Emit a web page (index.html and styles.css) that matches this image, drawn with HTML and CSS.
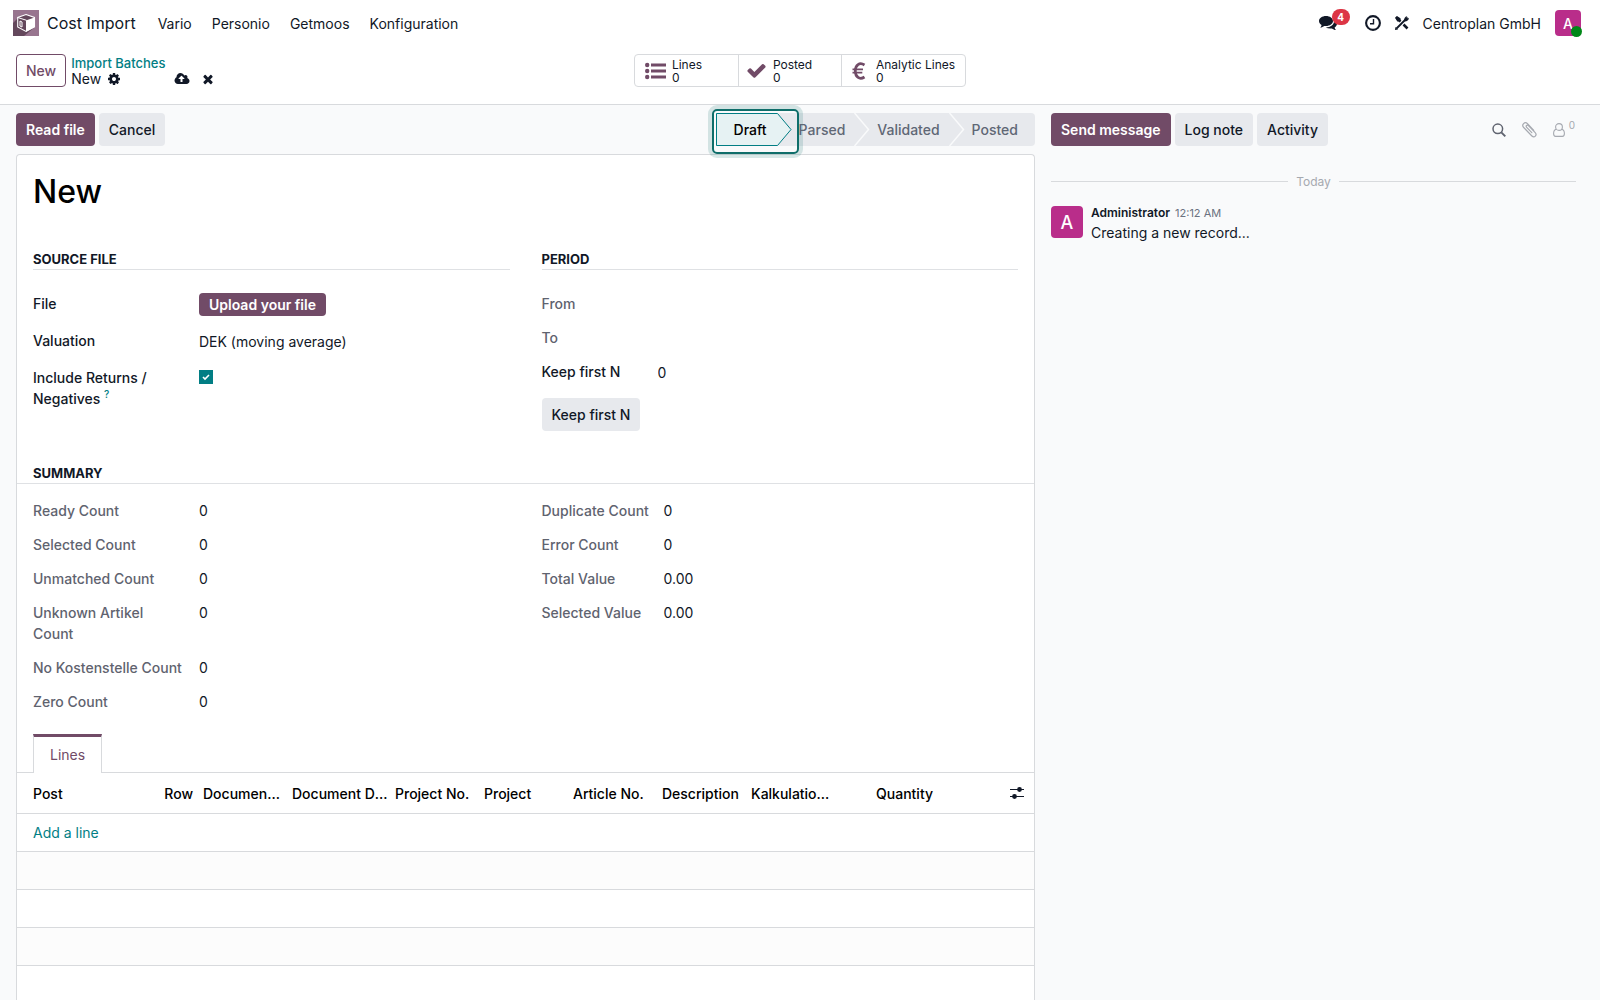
FILE: index.html
```html
<!DOCTYPE html>
<html lang="en">
<head>
    <meta charset="UTF-8">
    <title>Cost Import - New</title>
    <link rel="stylesheet" href="styles.css">
</head>
<body>
    <header class="navbar">
        <a class="brand" href="#">
            <svg class="brand-icon" viewBox="0 0 26 26" aria-hidden="true">
                <rect width="26" height="26" fill="#98758f"/>
                <path d="M5 8 0 13v13h11L22 17V8z" fill="#64485c"/>
                <path d="M13 4.500 21.500 7.500v9.500L13 21.500 4.700 17V7.500z" fill="#64485c" stroke="#fff" stroke-width="1.100"/>
                <path d="M13.500 10.300 21.500 7.500v9.500l-8 4.500z" fill="#fff"/>
                <path d="M4.700 7.500l8.800 2.800V21.500M7 11v5l2 1v-5z" fill="none" stroke="#fff" stroke-width="1"/>
            </svg>
            Cost Import
        </a>
        <nav class="menu">
            <a href="#">Vario</a>
            <a href="#">Personio</a>
            <a href="#">Getmoos</a>
            <a href="#">Konfiguration</a>
        </nav>
        <div class="systray">
            <button class="icon-btn messages" aria-label="Messages">
                <svg width="18" height="16" viewBox="0 0 18 16" fill="currentColor">
                    <path d="M7 1c3.900 0 7 2.200 7 5s-3.100 5-7 5c-.6 0-1.200 0-1.700-.1C4.200 11.800 2.800 12.400 1.200 12.500c.7-.7 1.200-1.500 1.400-2.600C1 9 0 7.600 0 6c0-2.800 3.100-5 7-5z"/>
                    <path d="M15.200 5c1.700.8 2.800 2.100 2.800 3.700 0 1.500-.9 2.800-2.400 3.700.2 1 .7 1.800 1.400 2.600-1.600-.1-3-.7-4.100-1.600-.5.1-1.100.1-1.700.1-1.700 0-3.200-.4-4.400-1.100C11.500 12.400 15.400 9.900 15.200 5z"/>
                </svg>
                <span class="badge">4</span>
            </button>
            <button class="icon-btn" aria-label="Activities">
                <svg width="16" height="16" viewBox="0 0 16 16" fill="none" stroke="currentColor">
                    <circle cx="8" cy="8" r="6.900" stroke-width="2.100"/>
                    <path d="M8.500 4v4.800H5" stroke-width="1.400"/>
                </svg>
            </button>
            <button class="icon-btn" aria-label="Tools">
                <svg width="14" height="14" viewBox="0 0 14 14">
                    <path d="M1.500 1.500 5.500 5.500M8.500 8.500l4 4" stroke="currentColor" stroke-width="2.600"/>
                    <path d="M12.500 1.500 1.500 12.500" stroke="currentColor" stroke-width="1.800"/>
                    <path d="M0 1.800 1.800 0l3.700 2.300v3.200H2.300zM9.400 5.600C8.600 3 9.800.6 12.300 0L10.800 2.100l1 1.200L14 1.800c-.3 2.600-2.200 4-4.600 3.800zM0 14l.4-3 2.600 2.600z" fill="currentColor"/>
                </svg>
            </button>
            <span class="company">Centroplan GmbH</span>
            <button class="avatar avatar-user" aria-label="Account">A<span class="online"></span></button>
        </div>
    </header>

    <div class="control-panel">
        <div class="cp-left">
            <button class="btn btn-outline">New</button>
            <div class="breadcrumb">
                <a href="#">Import Batches</a>
                <div class="crumb-current">
                    <span>New</span>
                    <button class="icon-btn cog" aria-label="Actions">
                        <svg width="14" height="14" viewBox="0 0 1792 1792" fill="currentColor"><path d="M1152 896q0-106-75-181t-181-75-181 75-75 181 75 181 181 75 181-75 75-181zm512-109v222q0 12-8 23t-20 13l-185 28q-19 54-39 91 35 50 107 138 10 12 10 25t-9 23q-27 37-99 108t-94 71q-12 0-26-9l-138-108q-44 23-91 38-16 136-29 186-7 28-36 28h-222q-14 0-24.500-8.500t-11.500-21.500l-28-184q-49-16-90-37l-141 107q-10 9-25 9-14 0-25-11-126-114-165-168-7-10-7-23 0-12 8-23 15-21 51-66.500t54-70.500q-27-50-41-99l-183-27q-13-2-21-12.500t-8-23.500v-222q0-12 8-23t19-13l186-28q14-46 39-92-40-57-107-138-10-12-10-24 0-10 9-23 26-36 98.500-107.500t94.500-71.500q13 0 26 10l138 107q44-23 91-38 16-136 29-186 7-28 36-28h222q14 0 24.500 8.500t11.500 21.500l28 184q49 16 90 37l142-107q9-9 24-9 13 0 25 10 129 119 165 170 7 8 7 22 0 12-8 23-15 21-51 66.500t-54 70.500q26 50 41 98l183 28q13 2 21 12.500t8 23.500z"/></svg>
                    </button>
                </div>
            </div>
            <div class="save-actions">
                <button class="icon-btn" aria-label="Save">
                    <svg width="16" height="14" viewBox="0 0 2048 1792" fill="currentColor"><path d="M1344 864q0-14-9-23l-352-352q-9-9-23-9t-23 9l-351 351q-10 12-10 24 0 14 9 23t23 9h224v352q0 13 9.500 22.500t22.500 9.500h192q13 0 22.500-9.500t9.500-22.500v-352h224q13 0 22.500-9.500t9.500-22.500zm640 288q0 159-112.500 271.500t-271.500 112.500h-1088q-185 0-316.500-131.500t-131.500-316.500q0-130 70-240t188-165q-2-30-2-43 0-212 150-362t362-150q156 0 285.500 87t188.500 231q71-62 166-62 106 0 181 75t75 181q0 76-41 138 130 31 213.500 135.500t83.500 238.500z"/></svg>
                </button>
                <button class="icon-btn" aria-label="Discard">
                    <svg width="14" height="14" viewBox="0 0 1792 1792" fill="currentColor"><path d="M1490 1322q0 40-28 68l-136 136q-28 28-68 28t-68-28l-294-294-294 294q-28 28-68 28t-68-28l-136-136q-28-28-28-68t28-68l294-294-294-294q-28-28-28-68t28-68l136-136q28-28 68-28t68 28l294 294 294-294q28-28 68-28t68 28l136 136q28 28 28 68t-28 68l-294 294 294 294q28 28 28 68z"/></svg>
                </button>
            </div>
        </div>
        <div class="stat-buttons">
            <button class="stat">
                <svg width="21" height="18" viewBox="0 0 21 18" fill="currentColor"><circle cx="2.200" cy="3" r="2.200"/><circle cx="2.200" cy="9" r="2.200"/><circle cx="2.200" cy="15" r="2.200"/><path d="M6 1.500h15v3H6zM6 7.500h15v3H6zM6 13.500h15v3H6z"/></svg>
                <span>Lines<br>0</span>
            </button>
            <button class="stat">
                <svg width="21" height="21" viewBox="0 0 1792 1792" fill="currentColor"><path d="M1671 566q0 40-28 68l-724 724-136 136q-28 28-68 28t-68-28l-136-136-362-362q-28-28-28-68t28-68l136-136q28-28 68-28t68 28l294 295 656-657q28-28 68-28t68 28l136 136q28 28 28 68z"/></svg>
                <span>Posted<br>0</span>
            </button>
            <button class="stat">
                <svg width="21" height="18" viewBox="0 0 21 18" fill="none" stroke="currentColor"><path d="M15.500 3C10.500-.2 6.300 3 6.300 9s4.200 9.200 9.200 6" stroke-width="2.700"/><path d="M3.500 7.300H14M3.500 10.700h9.800" stroke-width="1.800"/></svg>
                <span>Analytic Lines<br>0</span>
            </button>
        </div>
        <div class="cp-right"></div>
    </div>

    <main class="content">
        <section class="form-view">
            <div class="statusbar">
                <div class="btn-row">
                    <button class="btn btn-primary">Read file</button>
                    <button class="btn btn-secondary">Cancel</button>
                </div>
                <div class="stages">
                    <button class="stage stage-current">
                        <svg class="stage-bg" width="76" height="33" viewBox="0 0 76 33"><path d="M.5.500h61l13.500 16-13.500 16H.5z" fill="#e6f2f3" stroke="#017e84"/></svg>
                        <span>Draft</span>
                    </button>
                    <button class="stage">Parsed<svg class="stage-arrow" width="16" height="33" viewBox="0 0 16 33"><path d="M.5 0l14 16.500L.5 33" fill="none" stroke="#f9fafb" stroke-width="1.500"/></svg></button>
                    <button class="stage">Validated<svg class="stage-arrow" width="16" height="33" viewBox="0 0 16 33"><path d="M.5 0l14 16.500L.5 33" fill="none" stroke="#f9fafb" stroke-width="1.500"/></svg></button>
                    <button class="stage stage-last">Posted</button>
                </div>
            </div>

            <div class="sheet">
                <h1>New</h1>
                <div class="groups">
                    <div class="group">
                        <h2>Source File</h2>
                        <div class="fields fields-wide">
                            <label for="file">File</label>
                            <div><button class="btn btn-primary btn-upload" id="file">Upload your file</button></div>
                            <label for="valuation">Valuation</label>
                            <select id="valuation">
                                <option>DEK (moving average)</option>
                            </select>
                            <label for="returns">Include Returns / Negatives <sup>?</sup></label>
                            <input type="checkbox" id="returns" checked>
                        </div>
                    </div>
                    <div class="group">
                        <h2>Period</h2>
                        <div class="fields fields-period">
                            <span class="muted">From</span><span></span>
                            <span class="muted">To</span><span></span>
                            <label for="keep">Keep first N</label>
                            <input type="text" id="keep" value="0">
                        </div>
                        <button class="btn btn-secondary">Keep first N</button>
                    </div>
                </div>

                <h2 class="summary-title">Summary</h2>
                <div class="groups">
                    <div class="fields">
                        <span class="muted">Ready Count</span><span>0</span>
                        <span class="muted">Selected Count</span><span>0</span>
                        <span class="muted">Unmatched Count</span><span>0</span>
                        <span class="muted">Unknown Artikel Count</span><span>0</span>
                        <span class="muted">No Kostenstelle Count</span><span>0</span>
                        <span class="muted">Zero Count</span><span>0</span>
                    </div>
                    <div class="fields fields-totals">
                        <span class="muted">Duplicate Count</span><span>0</span>
                        <span class="muted">Error Count</span><span>0</span>
                        <span class="muted">Total Value</span><span>0.00</span>
                        <span class="muted">Selected Value</span><span>0.00</span>
                    </div>
                </div>

                <div class="tabs">
                    <button class="tab">Lines</button>
                </div>
                <table class="lines">
                    <colgroup>
                        <col>
                        <col class="col">
                        <col class="col">
                        <col class="col-date">
                        <col class="col">
                        <col class="col">
                        <col class="col">
                        <col class="col">
                        <col class="col">
                        <col class="col-date">
                        <col class="col-options">
                    </colgroup>
                    <thead>
                        <tr>
                            <th>Post</th>
                            <th class="num">Row</th>
                            <th>Document No.</th>
                            <th class="date">Document Date</th>
                            <th>Project No.</th>
                            <th>Project</th>
                            <th>Article No.</th>
                            <th>Description</th>
                            <th>Kalkulation Value</th>
                            <th class="num">Quantity</th>
                            <th class="options">
                                <button class="icon-btn" aria-label="Optional columns">
                                    <svg width="14" height="14" viewBox="0 0 14 14" fill="currentColor"><path d="M0 3h14v1H0zM0 10h14v1H0z"/><circle cx="9.500" cy="3.500" r="2.400"/><circle cx="4.500" cy="10.500" r="2.400"/></svg>
                                </button>
                            </th>
                        </tr>
                    </thead>
                    <tbody>
                        <tr><td colspan="11"><a href="#">Add a line</a></td></tr>
                        <tr><td colspan="11"></td></tr>
                        <tr><td colspan="11"></td></tr>
                        <tr><td colspan="11"></td></tr>
                    </tbody>
                </table>
            </div>
        </section>

        <aside class="chatter">
            <div class="chatter-top">
                <div class="btn-row">
                    <button class="btn btn-primary">Send message</button>
                    <button class="btn btn-secondary">Log note</button>
                    <button class="btn btn-secondary">Activity</button>
                </div>
                <div class="chatter-icons">
                    <button class="icon-btn search" aria-label="Search messages">
                        <svg width="14" height="14" viewBox="0 0 14 14" fill="none" stroke="currentColor"><circle cx="5.800" cy="5.800" r="4.800" stroke-width="1.500"/><path d="M9.300 9.300 13.300 13.300" stroke-width="1.900"/></svg>
                    </button>
                    <button class="icon-btn" aria-label="Attach files">
                        <svg width="15" height="16" viewBox="0 0 15 16" fill="none" stroke="currentColor" stroke-width="1.200" stroke-linecap="round"><path d="M9.800 10.700 4.700 5.300c-1.300-1.400.3-3 1.700-1.700l6.800 7.100c2.300 2.500-.9 5.700-3.300 3.300L1.700 5.500C-.9 2.700 2.800-.9 5.500 1.700l6.300 6.600"/></svg>
                    </button>
                    <button class="icon-btn followers" aria-label="Followers">
                        <svg width="12" height="14" viewBox="0 0 12 14" fill="none" stroke="currentColor" stroke-width="1.100"><circle cx="6" cy="4" r="3.400"/><path d="M3.300 6.200C1.500 6.600.6 8.300.6 10.500c0 2 .8 2.900 2 2.900h6.800c1.200 0 2-.9 2-2.900 0-2.200-.9-3.900-2.700-4.300"/></svg>
                        <span>0</span>
                    </button>
                </div>
            </div>
            <div class="date-line">Today</div>
            <article class="message">
                <div class="avatar avatar-author">A</div>
                <div>
                    <div class="message-head"><strong>Administrator</strong><time>12:12 AM</time></div>
                    <p>Creating a new record...</p>
                </div>
            </article>
        </aside>
    </main>
</body>
</html>
```
FILE: styles.css
```css
*, *::before, *::after {
    box-sizing: border-box;
}
body {
    margin: 0;
    height: 100vh;
    display: flex;
    flex-direction: column;
    overflow: hidden;
    font-family: Inter, sans-serif;
    font-size: 14px;
    line-height: 21px;
    color: #111827;
    background-color: #fff;
}
a {
    color: #017e84;
    text-decoration: none;
}
button, input, select {
    font: inherit;
    color: inherit;
}
button {
    cursor: pointer;
}
svg {
    display: block;
    flex: none;
}

/* Buttons */
.btn {
    padding: 5px 9px;
    border: 1px solid transparent;
    border-radius: 4px;
    font-weight: 500;
    white-space: nowrap;
}
.btn-primary {
    background-color: #714b67;
    color: #fff;
    font-weight: 600;
}
.btn-secondary {
    background-color: #e7e9ed;
}
.btn-outline {
    background-color: #fff;
    border-color: #714b67;
    color: #714b67;
}
.btn-upload {
    display: block;
    padding: 0 9px;
}
.btn-row {
    display: flex;
    gap: 4px;
}
.icon-btn {
    display: flex;
    align-items: center;
    padding: 0;
    border: none;
    background: none;
}

/* Top bar */
.navbar {
    display: flex;
    align-items: center;
    height: 46px;
    flex: none;
    padding: 0 19px 0 13px;
}
.navbar a {
    color: #111827;
}
.brand {
    display: flex;
    align-items: center;
    gap: 8px;
    font-size: 16px;
}
.brand-icon {
    width: 26px;
    height: 26px;
}
.menu {
    display: flex;
    gap: 20px;
    margin-left: 22px;
}
.systray {
    display: flex;
    align-items: center;
    gap: 14px;
    margin-left: auto;
}
.messages {
    position: relative;
    margin-right: 14px;
}
.badge {
    position: absolute;
    left: 13px;
    top: -6px;
    width: 18px;
    border-radius: 8px;
    background-color: #dc3545;
    color: #fff;
    font-size: 10px;
    font-weight: 700;
    line-height: 16px;
    text-align: center;
}
.avatar {
    display: flex;
    align-items: center;
    justify-content: center;
    flex: none;
    border: none;
    border-radius: 4px;
    background-color: #b92d8a;
    color: #fff;
    font-weight: 500;
}
.avatar-user {
    position: relative;
    width: 26px;
    height: 26px;
    padding: 0;
}
.online {
    position: absolute;
    right: -1px;
    bottom: -1px;
    width: 11px;
    height: 11px;
    border-radius: 50%;
    background-color: #008818;
}

/* Breadcrumb and stat buttons */
.control-panel {
    display: grid;
    grid-template-columns: 1fr auto 1fr;
    align-items: start;
    padding: 8px 16px 17px;
    border-bottom: 1px solid #d8dadd;
    flex: none;
}
.cp-left {
    display: flex;
    gap: 5px;
}
.breadcrumb {
    padding-top: 1px;
    line-height: 16px;
}
.breadcrumb a {
    display: block;
    font-size: 13px;
    font-weight: 500;
}
.crumb-current {
    display: flex;
    gap: 6px;
}
.save-actions {
    display: flex;
    align-items: flex-end;
    gap: 11px;
    margin-left: 4px;
    padding-bottom: 1px;
}
.stat-buttons {
    display: flex;
    border: 1px solid #d8dadd;
    border-radius: 4px;
}
.stat {
    display: flex;
    align-items: center;
    gap: 6px;
    min-width: 103px;
    height: 31px;
    padding: 0 10px;
    border: none;
    background: none;
    font-size: 12px;
    line-height: 13px;
    text-align: left;
}
.stat + .stat {
    border-left: 1px solid #d8dadd;
    padding-left: 7px;
}
.stat svg {
    color: #714b67;
}

/* Main area */
.content {
    display: grid;
    grid-template-columns: 207fr 113fr;
    flex: 1;
    min-height: 0;
    background-color: #f9fafb;
}
.form-view {
    display: flex;
    flex-direction: column;
    min-width: 0;
    min-height: 0;
    padding: 8px 0 0 16px;
    overflow-y: auto;
    scrollbar-width: none;
}
.statusbar {
    display: flex;
    justify-content: space-between;
    margin-bottom: 8px;
}
.stages {
    display: flex;
    border-radius: 0 4px 4px 0;
    background-color: #e7e9ed;
}
.stage {
    position: relative;
    padding: 0 9px 0 23px;
    border: none;
    background: none;
    color: #5f6775;
    font-weight: 500;
}
.stage-last {
    padding-right: 17px;
}
.stage-current {
    padding: 0 9px 0 18px;
    color: #000;
}
.stage-current span {
    position: relative;
}
.stage-bg {
    position: absolute;
    left: 0;
    top: 0;
}
.stage-arrow {
    position: absolute;
    left: 100%;
    top: 0;
}
/* focus ring round the current stage */
.stage-current::after {
    content: "";
    position: absolute;
    left: -4px;
    top: -4px;
    width: 87px;
    height: 45px;
    border: 2px solid #0f6e6a;
    border-radius: 5px;
    box-shadow: 0 0 0 4px rgba(15, 110, 106, 0.16);
}
.sheet {
    flex: 1 0 auto;
    border: 1px solid #d8dadd;
    border-bottom: none;
    border-radius: 4px 4px 0 0;
    background-color: #fff;
}
h1 {
    margin: 16px 16px 37px;
    font-size: 32px;
    font-weight: 500;
    line-height: 41px;
    color: #000;
}
h2 {
    margin: 0;
    border-bottom: 1px solid #dfe1e4;
    font-size: 13px;
    font-weight: 700;
    line-height: 20px;
    text-transform: uppercase;
}
.groups {
    display: grid;
    grid-template-columns: 1fr 1fr;
    column-gap: 32px;
    padding: 0 16px;
}
.fields {
    display: grid;
    grid-template-columns: 150px 1fr;
    column-gap: 16px;
    row-gap: 13px;
    align-content: start;
    align-items: start;
}
.fields label {
    font-weight: 500;
}
.muted {
    color: #5f636f;
    font-weight: 500;
}
.group .fields {
    padding-top: 23px;
}
.fields-wide {
    row-gap: 14px;
}
.fields-period {
    grid-template-columns: 100px 1fr;
    margin-bottom: 14px;
}
.fields-totals {
    grid-template-columns: 112px 1fr;
    column-gap: 10px;
}
.fields select, .fields input[type="text"] {
    width: 100%;
    height: 23px;
    padding: 0;
    border: none;
    background: none;
    appearance: none;
}
.fields input[type="checkbox"] {
    width: 14px;
    height: 14px;
    margin: 3px 0;
    appearance: none;
    background: #017e84 url("data:image/svg+xml,%3Csvg xmlns='http://www.w3.org/2000/svg' viewBox='0 0 14 14'%3E%3Cpath d='M4 7l2 2 4-4' fill='none' stroke='%23fff' stroke-width='1.600'/%3E%3C/svg%3E");
}
sup {
    color: #017e84;
    font-size: 10px;
    line-height: 10px;
}
.summary-title {
    margin: 32px 0 16px;
    padding-left: 16px;
}

/* Lines tab */
.tabs {
    display: flex;
    margin-top: 22px;
    padding-left: 16px;
    border-bottom: 1px solid #d8dadd;
}
.tab {
    height: 39px;
    margin-bottom: -1px;
    padding: 0 16px 2px;
    border: solid #d8dadd;
    border-width: 3px 1px 0;
    border-top-color: #714b67;
    background-color: #fff;
    color: #714b67;
}
.lines {
    width: 100%;
    table-layout: fixed;
    border-collapse: separate;
    border-spacing: 0;
}
.col {
    width: 89px;
}
.col-date {
    width: 103px;
}
.col-options {
    width: 96px;
}
.lines th {
    height: 41px;
    padding: 0 5px;
    border-bottom: 1px solid #d8dadd;
    color: #000;
    font-weight: 500;
    text-align: left;
    overflow: hidden;
    text-overflow: ellipsis;
    white-space: nowrap;
}
.lines td {
    height: 38px;
    padding: 0 16px;
    border-bottom: 1px solid #d8dadd;
}
.lines th:first-child {
    padding-left: 16px;
}
.lines .date {
    padding-right: 0;
}
.lines .num {
    text-align: right;
}
.lines .options {
    padding-right: 10px;
    color: #111827;
}
.options .icon-btn {
    margin-left: auto;
}
.lines tbody tr:nth-child(even) {
    background-color: #fcfcfc;
}

/* Chatter */
.chatter {
    padding: 8px 24px 0 16px;
}
.chatter-top {
    display: flex;
    justify-content: space-between;
}
.chatter-icons {
    display: flex;
    align-items: center;
    gap: 16px;
    padding-right: 1px;
    color: #a6a9b0;
}
.search {
    color: #5f636f;
}
.followers {
    gap: 4px;
}
.followers span {
    margin-bottom: 10px;
    font-size: 10px;
    line-height: 10px;
}
.date-line {
    display: flex;
    align-items: center;
    gap: 8px;
    margin: 25px 0 14px;
    color: #a6a9b0;
    font-size: 12px;
}
.date-line::before, .date-line::after {
    content: "";
    flex: 1;
    border-top: 1px solid #d8dadd;
}
.message {
    display: flex;
    gap: 8px;
}
.avatar-author {
    width: 32px;
    height: 32px;
    font-size: 18px;
}
.message-head {
    display: flex;
    align-items: baseline;
    gap: 5px;
    line-height: 14px;
    font-size: 12px;
}
.message-head strong {
    font-weight: 600;
}
time {
    color: #6b7280;
    font-size: 11px;
}
.message p {
    margin: 2px 0 0;
}
```
